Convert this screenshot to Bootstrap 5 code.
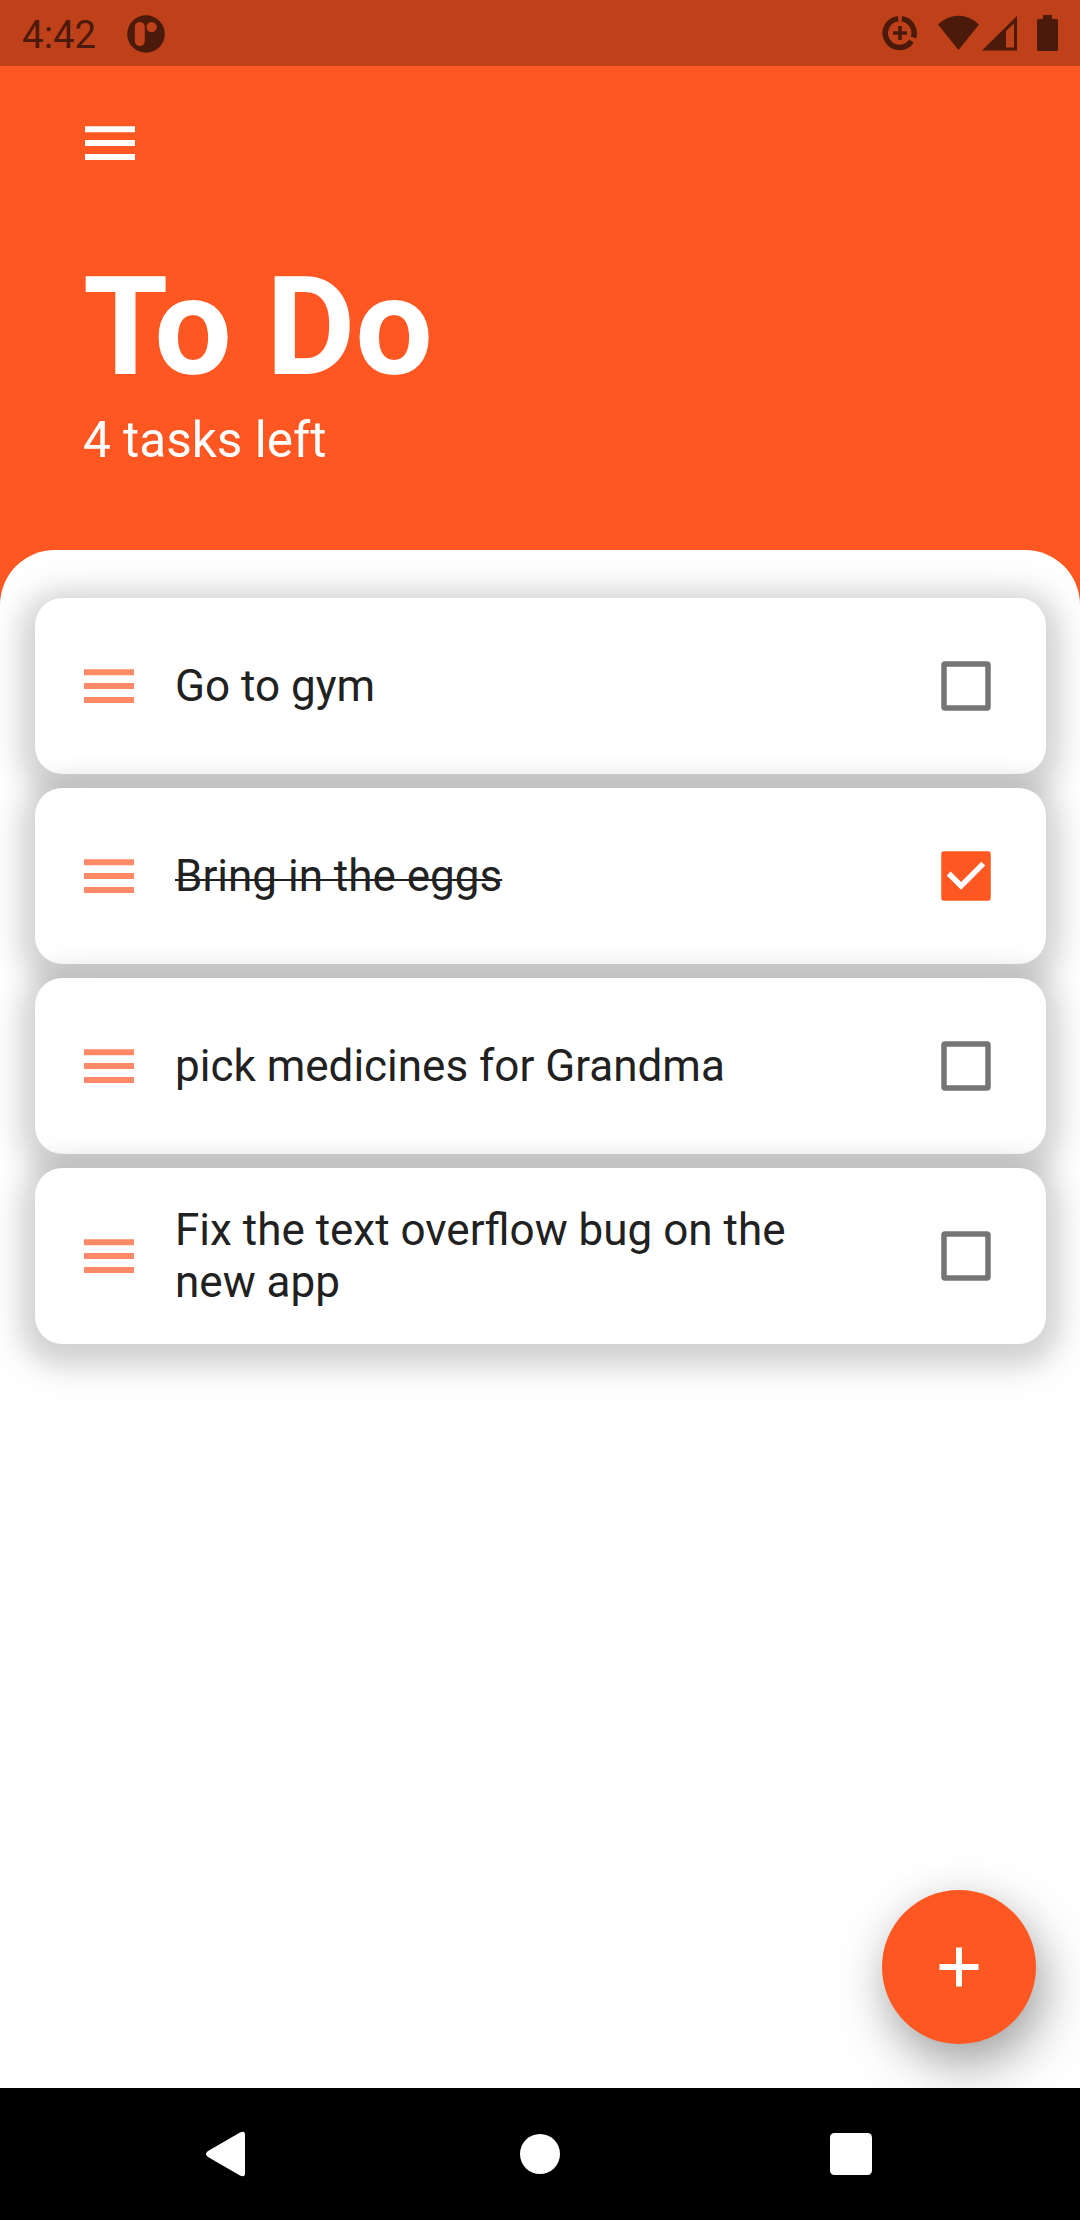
<!DOCTYPE html>
<html lang="en">
<head>
<meta charset="utf-8">
<meta name="viewport" content="width=device-width, initial-scale=1">
<title>To Do</title>
<link href="https://cdn.jsdelivr.net/npm/bootstrap@5.3.0/dist/css/bootstrap.min.css" rel="stylesheet">
<style>
  body { font-family: Roboto, sans-serif; background: #ff5722; color: #212121; }
  svg { display: block; flex: none; }
  .screen { width: 1080px; height: 2220px; }
  .statusbar { height: 66px; background: #bf411a; color: #4c1a0a; padding: 3px 22px 0 22px; }
  .clock { font-size: 38.5px; line-height: 63px; }
  .notif { margin-left: 31px; margin-top: -2px; }
  .sys-icons { margin-top: -3px; }
  .wifi { margin-left: 20px; }
  .cell { margin-left: 3px; }
  .batt { margin-left: 20px; }
  .app-head { height: 484px; padding: 60px 83px 0; }
  .menu-icon { margin-left: 2px; }
  .app-title { font-size: 137.5px; line-height: 161px; margin: 87px 0 3px; }
  .kern-to { letter-spacing: -14px; }
  .app-sub { font-size: 49.5px; line-height: 58px; }
  .sheet { background: #fefefe; border-radius: 55px 55px 0 0; padding: 48px 34px 0 35px; }
  .tasks { gap: 14px; }
  .task { height: 176px; border: 0; border-radius: 27.5px; background: #fff; padding: 0 55px 0 49px;
    box-shadow: 0 8px 28px 15px rgba(0,0,0,.175); }
  .grip { color: #ff8a65; }
  .task-text { font-size: 44px; line-height: 52px; margin-left: 41px; width: 640px; color: #212121; }
  /* strike line raised from the baseline so that it crosses the lower x-height */
  .task-done { text-decoration: underline 2px; text-underline-offset: -12px; text-decoration-skip-ink: none; }
  .fab { position: absolute; right: 44px; bottom: 44px; width: 154px; height: 154px; background: #ff5722;
    box-shadow: 8px 22px 50px rgba(0,0,0,.32), 0 6px 40px rgba(0,0,0,.08); }
  .sysnav { height: 132px; background: #000; padding: 0 208px 0 206px; }
  .nav-home { margin-left: 5px; }
</style>
</head>
<body>
<svg width="0" height="0" class="position-absolute" aria-hidden="true">
  <symbol id="bars" viewBox="0 0 50 34"><path d="M0 .2h50v6H0zM0 14h50v6H0zM0 27.9h50v6H0z" fill="currentColor"/></symbol>
  <symbol id="box" viewBox="0 0 50 50"><rect x="3" y="3" width="44" height="44" rx="1" fill="none" stroke="#757575" stroke-width="5.5"/></symbol>
  <symbol id="box-done" viewBox="0 0 50 50"><rect x=".25" y=".25" width="49.5" height="49.5" rx="2.75" fill="#ff5722"/><path d="M7.7 22.5 20.1 34.9 42.3 12.6" fill="none" stroke="#fff" stroke-width="5.5"/></symbol>
</svg>
<div class="screen d-flex flex-column overflow-hidden">
  <div class="statusbar d-flex align-items-center">
    <span class="clock">4:42</span>
    <svg class="notif" width="38" height="38" viewBox="0 0 38 38"><path fill="currentColor" fill-rule="evenodd" d="M19 .2a18.8 18.8 0 1 1 0 37.6 18.8 18.8 0 0 1 0-37.6zM12.8 6.9a5 5 0 0 0-5 5v14.2a5 5 0 0 0 10 0V11.900a5 5 0 0 0-5-5zM24.600 6.900a5.200 5.200 0 1 0 0 10.400 5.200 5.200 0 0 0 0-10.400z"/></svg>
    <div class="sys-icons d-flex align-items-center ms-auto">
      <svg width="36" height="36" viewBox="0 0 36 36" fill="none" stroke="currentColor"><path d="M19.700 3.700A14.400 14.400 0 0 1 31.400 22.500M29.500 26.200A14.400 14.400 0 1 1 16.300 3.700" stroke-width="5.600"/><path d="M18 11v14M11 18h14" stroke-width="3.600"/></svg>
      <svg class="wifi" width="41" height="36" viewBox="0 0 41 36"><path fill="currentColor" d="M0 9.600Q9 .8 20.500.8T41 9.600L20.500 35z"/></svg>
      <svg class="cell" width="35" height="36" viewBox="0 0 35 36"><path fill="currentColor" fill-rule="evenodd" d="M35 1v34.500H0zM32 8.500 24 16v16.500h8z"/></svg>
      <svg class="batt" width="21" height="36" viewBox="0 0 21 36"><path fill="currentColor" d="M6 0h9v4h4.500q1.500 0 1.500 1.500v29q0 1.500-1.500 1.500h-18Q0 36 0 34.500v-29Q0 4 1.500 4H6z"/></svg>
    </div>
  </div>
  <header class="app-head text-white">
    <svg class="menu-icon" width="50" height="34"><use href="#bars"/></svg>
    <h1 class="app-title fw-bold"><span class="kern-to">T</span>o Do</h1>
    <div class="app-sub">4 tasks left</div>
  </header>
  <main class="sheet flex-grow-1 position-relative overflow-hidden">
    <div class="tasks d-flex flex-column">
      <div class="task card flex-row align-items-center"><svg class="grip" width="50" height="34"><use href="#bars"/></svg><div class="task-text">Go to gym</div><svg class="ms-auto" width="50" height="50"><use href="#box"/></svg></div>
      <div class="task card flex-row align-items-center"><svg class="grip" width="50" height="34"><use href="#bars"/></svg><div class="task-text task-done">Bring in the eggs</div><svg class="ms-auto" width="50" height="50"><use href="#box-done"/></svg></div>
      <div class="task card flex-row align-items-center"><svg class="grip" width="50" height="34"><use href="#bars"/></svg><div class="task-text">pick medicines for Grandma</div><svg class="ms-auto" width="50" height="50"><use href="#box"/></svg></div>
      <div class="task card flex-row align-items-center"><svg class="grip" width="50" height="34"><use href="#bars"/></svg><div class="task-text">Fix the text overflow bug on the new app</div><svg class="ms-auto" width="50" height="50"><use href="#box"/></svg></div>
    </div>
    <button class="fab btn rounded-circle border-0 p-0 d-flex align-items-center justify-content-center" aria-label="Add task"><svg width="40" height="40" viewBox="0 0 40 40"><path d="M20 .5v39M.5 20h39" stroke="#fff" stroke-width="6"/></svg></button>
  </main>
  <nav class="sysnav d-flex align-items-center justify-content-between">
    <svg width="39" height="46" viewBox="0 0 39 46"><path d="M2 20 34 1.500Q39-1 39 4v38q0 5-5 2.500L2 26q-4-3 0-6z" fill="#fff"/></svg>
    <svg class="nav-home" width="40" height="40" viewBox="0 0 40 40"><circle cx="20" cy="20" r="20" fill="#fff"/></svg>
    <svg width="42" height="42" viewBox="0 0 42 42"><rect width="42" height="42" rx="4.500" fill="#fff"/></svg>
  </nav>
</div>
<script src="https://cdn.jsdelivr.net/npm/bootstrap@5.3.0/dist/js/bootstrap.bundle.min.js"></script>
</body>
</html>
